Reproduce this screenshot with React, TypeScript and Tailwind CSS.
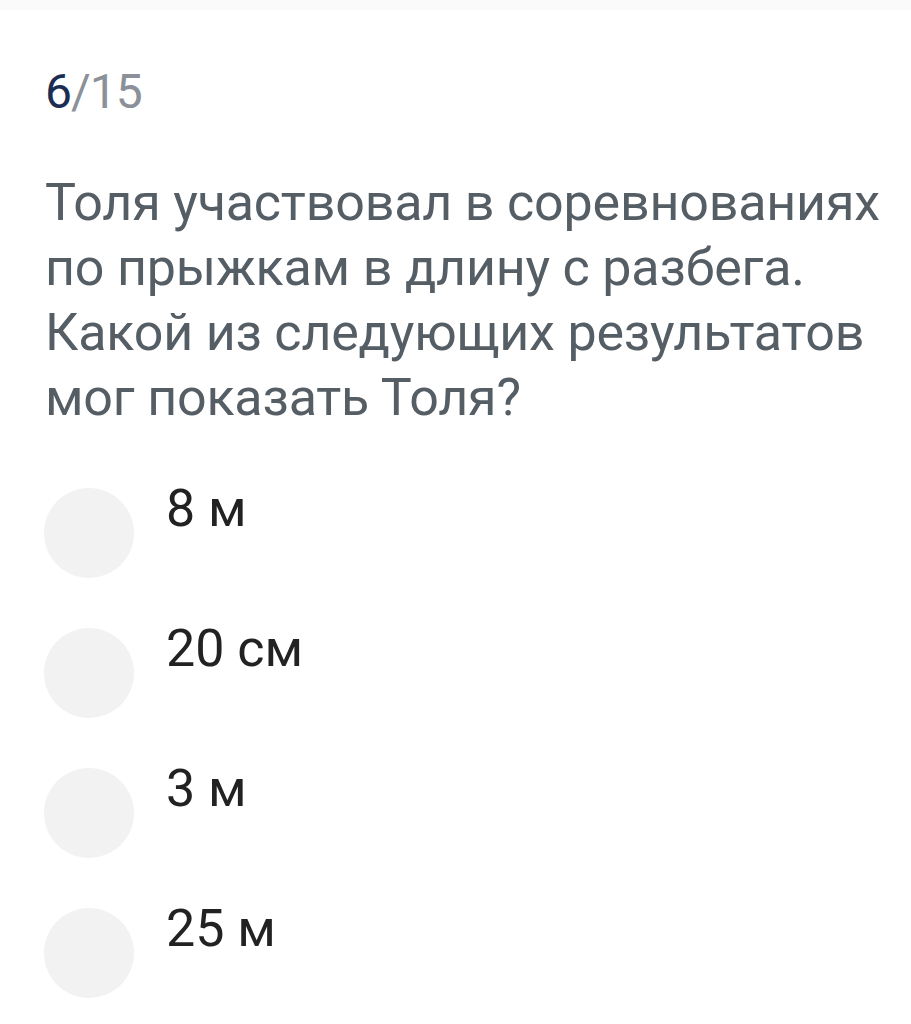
export default function App() {
  const options = ['8 м', '20 см', '3 м', '25 м'];
  return (
    <div className="min-h-screen bg-white font-['Roboto',sans-serif]">
      <div className="h-[10px] bg-[#fafafa]" />
      <div className="pl-[44px] pr-[10px] pt-[52px]">
        <div className="text-[48px] leading-[60px] tracking-[-1px] pl-[1px]">
          <span className="text-[#1c2d52]">6</span>
          <span className="text-[#8b9099]">/15</span>
        </div>
        <p className="mt-[48px] pl-[1px] text-[52px] leading-[65px] text-[#555d65] tracking-[-0.2px]">
          Толя участвовал в соревнованиях по прыжкам в длину с разбега. Какой из следующих результатов мог показать Толя?
        </p>
        <div className="mt-[58px] flex flex-col gap-[50px]">
          {options.map((o) => (
            <label key={o} className="flex items-start gap-[32px]">
              <span className="w-[90px] h-[90px] rounded-full bg-[#f2f2f2] shrink-0" />
              <span className="text-[52px] leading-[42px] text-[#222222]">{o}</span>
            </label>
          ))}
        </div>
      </div>
    </div>
  );
}
